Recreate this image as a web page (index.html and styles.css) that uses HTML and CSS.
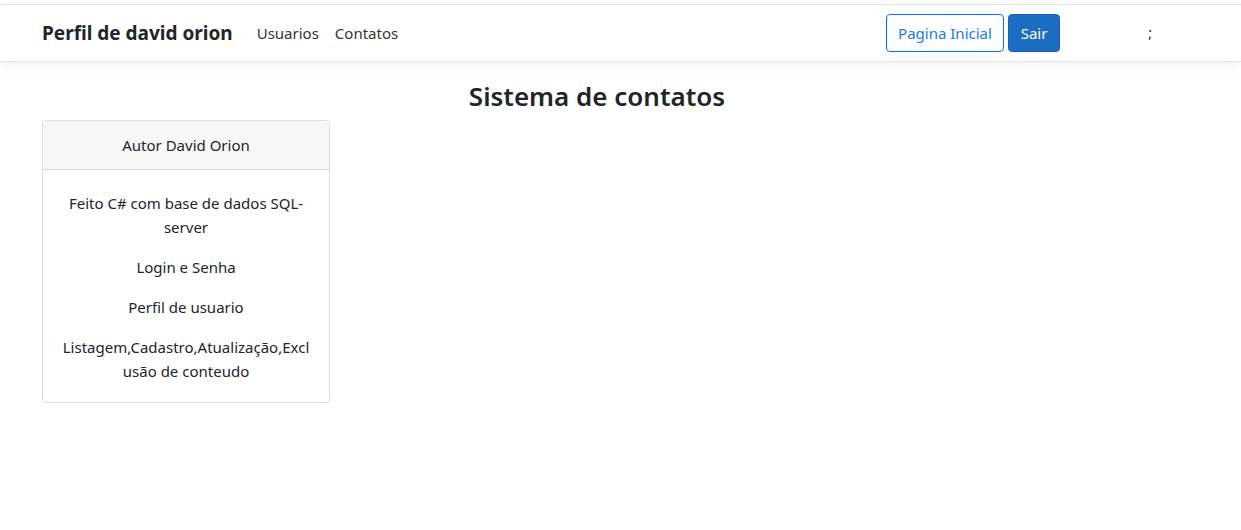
FILE: index.html
```html
<!DOCTYPE html>
<html lang="pt-br">
<head>
<meta charset="utf-8">
<title>Sistema de contatos</title>
<link rel="stylesheet" href="styles.css">
</head>
<body>
<header class="topbar">
  <nav class="navbar">
    <div class="nav-inner">
      <a class="brand" href="#">Perfil de david orion</a>
      <ul class="nav-links">
        <li><a href="#">Usuarios</a></li>
        <li><a href="#">Contatos</a></li>
      </ul>
      <div class="nav-actions">
        <a class="btn btn-outline" href="#">Pagina Inicial</a>
        <a class="btn btn-primary" href="#">Sair</a>
        <span class="semi">;</span>
      </div>
    </div>
  </nav>
</header>
<main class="container">
  <h3 class="title">Sistema de contatos</h3>
  <div class="card">
    <div class="card-header">Autor David Orion</div>
    <div class="card-body">
      <p>Feito C# com base de dados SQL-<br>server</p>
      <p>Login e Senha</p>
      <p>Perfil de usuario</p>
      <p>Listagem,Cadastro,Atualização,Excl<br>usão de conteudo</p>
    </div>
  </div>
</main>
</body>
</html>
```

FILE: styles.css
```css
html, body {
  margin: 0;
  padding: 0;
  background: #fff;
}
body {
  font-family: "Segoe UI", "Noto Sans", "Open Sans", sans-serif;
  font-size: 15px;
  line-height: 24px;
  color: #212529;
}
.topbar {
  padding-top: 4px;
}
.navbar {
  border-top: 1px solid #dee2e6;
  border-bottom: 1px solid #e5e5e5;
  box-shadow: 0 4px 12px rgba(0, 0, 0, 0.05);
  height: 58px;
  box-sizing: border-box;
}
.nav-inner {
  width: 1110px;
  margin-left: 42px;
  height: 100%;
  display: flex;
  align-items: center;
}
.brand {
  font-size: 19px;
  font-weight: 700;
  color: #212529;
  text-decoration: none;
  margin-right: 24px;
  white-space: nowrap;
}
.nav-links {
  list-style: none;
  margin: 0;
  padding: 0;
  display: flex;
  gap: 16px;
}
.nav-links a {
  color: #333;
  text-decoration: none;
}
.nav-actions {
  margin-left: auto;
  display: flex;
  align-items: center;
}
.btn {
  display: inline-flex;
  align-items: center;
  justify-content: center;
  height: 38px;
  box-sizing: border-box;
  padding: 0 6px;
  border-radius: 4px;
  text-decoration: none;
  font-size: 15px;
  white-space: nowrap;
}
.btn-outline {
  width: 118px;
  border: 1px solid #0d6efd;
  color: #1a7be6;
  background: #fff;
}
.btn-primary {
  width: 52px;
  margin-left: 4px;
  background: #1b6ec2;
  border: 1px solid #1861ac;
  color: #fff;
}
.semi {
  width: 92px;
  text-align: right;
  font-size: 14px;
  color: #212529;
}
.container {
  width: 1110px;
  margin-left: 42px;
}
.title {
  margin: 17px 0 7px;
  text-align: center;
  font-size: 26px;
  font-weight: 600;
  line-height: 34px;
}
.card {
  width: 288px;
  border: 1px solid rgba(0, 0, 0, 0.125);
  border-radius: 4px;
  box-sizing: border-box;
  overflow: hidden;
}
.card-header {
  background: #f7f7f7;
  border-bottom: 1px solid rgba(0, 0, 0, 0.125);
  text-align: center;
  height: 49px;
  display: flex;
  align-items: center;
  justify-content: center;
  box-sizing: border-box;
}
.card-body {
  padding: 21px 8px 19px;
  text-align: center;
}
.card-body p {
  margin: 0 0 16px;
  white-space: nowrap;
}
.card-body p:last-child {
  margin-bottom: 0;
}
```
